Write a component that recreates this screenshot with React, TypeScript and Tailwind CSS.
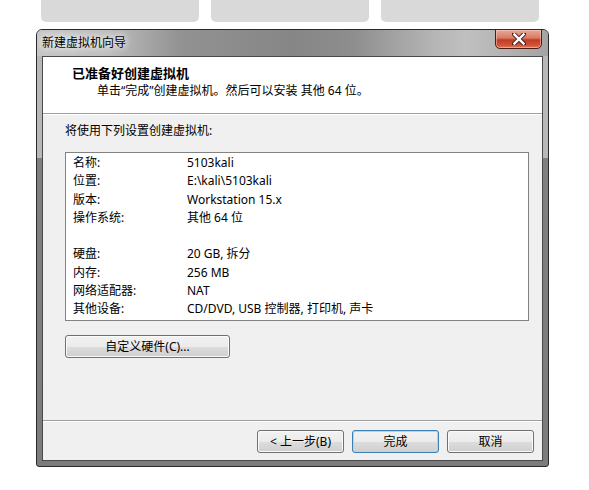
import React from "react";

const font = { fontFamily: "'Noto Sans', 'Noto Sans CJK SC', sans-serif" };

function WinButton({ children, w, primary }: { children: React.ReactNode; w: string; primary?: boolean }) {
  return (
    <div
      className={`${w} h-[23px] rounded-[3px] border ${primary ? "border-[#3c7fb1] shadow-[inset_0_0_0_1px_#9fdcf7]" : "border-[#707070] shadow-[inset_0_0_0_1px_#fbfbfb]"} bg-[linear-gradient(to_bottom,#f2f2f2_0%,#ebebeb_50%,#dddddd_50%,#cfcfcf_100%)] flex items-center justify-center text-[12px] text-black leading-none`}
    >
      {children}
    </div>
  );
}

const rows1 = [
  ["名称:", "5103kali"],
  ["位置:", "E:\\kali\\5103kali"],
  ["版本:", "Workstation 15.x"],
  ["操作系统:", "其他 64 位"],
];
const rows2 = [
  ["硬盘:", "20 GB, 拆分"],
  ["内存:", "256 MB"],
  ["网络适配器:", "NAT"],
  ["其他设备:", "CD/DVD, USB 控制器, 打印机, 声卡"],
];

export default function App() {
  return (
    <div className="w-[589px] h-[490px] bg-white overflow-hidden" style={font}>
      {/* background tabs */}
      <div className="flex gap-[12px] pl-[41px]">
        <div className="w-[158px] h-[22px] bg-[#d9d9d9] rounded-b-[5px]" />
        <div className="w-[158px] h-[22px] bg-[#d9d9d9] rounded-b-[5px]" />
        <div className="w-[158px] h-[22px] bg-[#d9d9d9] rounded-b-[5px]" />
      </div>

      {/* dialog */}
      <div className="ml-[36px] mt-[7px] w-[513px] h-[438px] border border-[#2a2a2a] rounded-t-[6px] rounded-b-[3px] bg-[linear-gradient(to_bottom,#b8b8b8_0,#b8b8b8_128px,#808080_128px,#7c7c7c_100%)] flex flex-col overflow-hidden">
        {/* title bar */}
        <div className="h-[26px] flex items-start justify-between bg-[linear-gradient(to_right,#c6c6c6_0%,#bdbdbd_14%,#929292_28%,#868686_50%,#8e8e8e_62%,#b6b6b6_78%,#c0c0c0_84%,#a4a4a4_100%)] pl-[5px] pr-[6px]">
          <span className="mt-[4px] text-[12px] text-black [text-shadow:0_0_6px_#ffffff,0_0_10px_#ffffff]">新建虚拟机向导</span>
          <div className="-mt-px w-[47px] h-[20px] rounded-b-[5px] border border-[#4e1a12] bg-[linear-gradient(to_bottom,#e8a898_0%,#d67a64_45%,#c23a22_55%,#d0553a_85%,#e07a5a_100%)] flex items-center justify-center shadow-[inset_0_0_0_1px_rgba(255,210,200,0.5)]">
            <svg width="14" height="12" viewBox="0 0 14 12">
              <path d="M2 1 L12 11 M12 1 L2 11" stroke="#3a1a14" strokeWidth="4.2" strokeLinecap="square" />
              <path d="M2.4 1.4 L11.6 10.6 M11.6 1.4 L2.4 10.6" stroke="#ffffff" strokeWidth="2.4" strokeLinecap="square" />
            </svg>
          </div>
        </div>

        {/* frame sides + client */}
        <div className="flex-1 px-[5px] pb-[5px] flex">
          <div className="flex-1 border border-[#4a4a4a] bg-[#f0f0f0] flex flex-col">
            {/* header */}
            <div className="h-[56px] bg-white flex flex-col">
              <div className="pl-[29px] pt-[7px] text-[13px] font-bold leading-[18px] text-black">已准备好创建虚拟机</div>
              <div className="pl-[54px] text-[12px] leading-[18px] text-black">单击“完成”创建虚拟机。然后可以安装 其他 64 位。</div>
            </div>
            <div className="h-px bg-[#a0a0a0]" />
            <div className="h-px bg-white" />

            {/* body */}
            <div className="h-[305px] flex flex-col pl-[22px] pr-[13px]">
              <div className="mt-[7px] text-[12px] leading-[18px] text-black">将使用下列设置创建虚拟机:</div>
              <div className="mt-[12px] h-[169px] border border-[#828282] bg-white pl-[7px] pt-px text-[12px] leading-[18.25px] text-black">
                {rows1.map(([k, v]) => (
                  <div key={k} className="flex">
                    <span className="w-[114px]">{k}</span>
                    <span>{v}</span>
                  </div>
                ))}
                <div className="h-[18.25px]" />
                {rows2.map(([k, v]) => (
                  <div key={k} className="flex">
                    <span className="w-[114px]">{k}</span>
                    <span>{v}</span>
                  </div>
                ))}
              </div>
              <div className="mt-[14px]">
                <WinButton w="w-[165px]">自定义硬件(C)...</WinButton>
              </div>
            </div>

            <div className="h-px bg-[#a0a0a0]" />
            <div className="h-px bg-white" />

            {/* footer */}
            <div className="flex-1 flex justify-end items-start pt-[8px] pr-[8px] gap-[8px]">
              <WinButton w="w-[87px]">&lt; 上一步(B)</WinButton>
              <WinButton w="w-[87px]" primary>完成</WinButton>
              <WinButton w="w-[87px]">取消</WinButton>
            </div>
          </div>
        </div>
      </div>
    </div>
  );
}
